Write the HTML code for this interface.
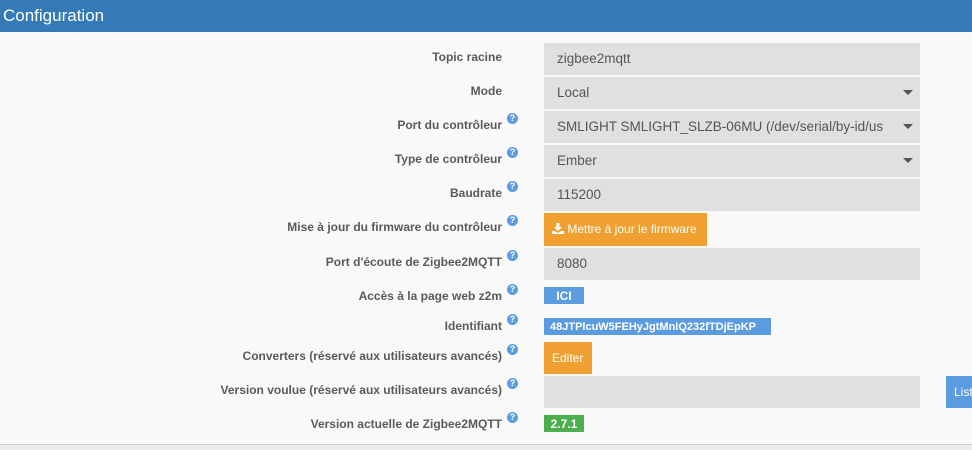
<!DOCTYPE html>
<html><head><meta charset="utf-8"><style>
*{box-sizing:border-box;margin:0;padding:0}
body{width:972px;height:450px;background:#f9f9f9;font-family:"Liberation Sans",sans-serif;position:relative;overflow:hidden;color:#555}
.hdr{position:absolute;left:0;top:0;width:972px;height:32px;background:#337ab7;color:#fff;font-size:17px;padding:6px 0 0 3px}
.lbl{position:absolute;right:470px;font-size:12px;font-weight:bold;color:#5a5a5a;white-space:nowrap;text-align:right}
.q{position:absolute;left:507px;width:11px;height:11px;border-radius:50%;background:#5b9be0;color:#fff;font-size:9px;font-weight:bold;text-align:center;line-height:11px}
.in{position:absolute;left:544px;width:376px;height:32px;background:#e0e0e0;font-size:13.5px;color:#555;padding:8px 0 0 13px;white-space:nowrap;overflow:hidden}
.car{position:absolute;right:7px;top:13px;width:0;height:0;border-left:5px solid transparent;border-right:5px solid transparent;border-top:5px solid #555}
.btn{position:absolute;left:544px;background:#f0a030;color:#fff;font-size:12px;padding:9px 8px 0;white-space:nowrap}
.tag{position:absolute;left:544px;height:17px;font-size:12px;font-weight:bold;color:#fff;padding:2px 6px 0;background:#5b9be0;white-space:nowrap;overflow:hidden}
</style></head><body>
<div class="hdr">Configuration</div>

<div class="lbl" style="top:50px;right:470px">Topic racine</div>
<div class="in" style="top:43px">zigbee2mqtt</div>

<div class="lbl" style="top:84px">Mode</div>
<div class="in" style="top:77px">Local<div class="car"></div></div>

<div class="lbl" style="top:118px">Port du contrôleur</div><div class="q" style="top:113px">?</div>
<div class="in" style="top:111px;padding-right:30px">SMLIGHT SMLIGHT_SLZB-06MU (/dev/serial/by-id/us<div class="car"></div></div>

<div class="lbl" style="top:152px">Type de contrôleur</div><div class="q" style="top:147px">?</div>
<div class="in" style="top:145px">Ember<div class="car"></div></div>

<div class="lbl" style="top:186px">Baudrate</div><div class="q" style="top:181px">?</div>
<div class="in" style="top:179px">115200</div>

<div class="lbl" style="top:220px">Mise à jour du firmware du contrôleur</div><div class="q" style="top:215px">?</div>
<div class="btn" style="top:213px;height:33px;width:163px"><svg width="12" height="11" viewBox="0 0 12 11" style="vertical-align:-1px"><path d="M4.5 0h3v4h2.5L6 8 2 4h2.5z M0 8h3l3 2 3-2h3v3H0z" fill="#fff"/></svg> Mettre à jour le firmware</div>

<div class="lbl" style="top:255px">Port d'écoute de Zigbee2MQTT</div><div class="q" style="top:250px">?</div>
<div class="in" style="top:248px">8080</div>

<div class="lbl" style="top:289px">Accès à la page web z2m</div><div class="q" style="top:284px">?</div>
<div class="tag" style="top:287px;width:40px;text-align:center">ICI</div>

<div class="lbl" style="top:319px">Identifiant</div><div class="q" style="top:314px">?</div>
<div class="tag" style="top:318px;width:227px;font-size:11px;padding-top:3px">48JTPlcuW5FEHyJgtMnIQ232fTDjEpKP</div>

<div class="lbl" style="top:349px">Converters (réservé aux utilisateurs avancés)</div><div class="q" style="top:344px">?</div>
<div class="btn" style="top:342px;height:32px;width:48px">Editer</div>

<div class="lbl" style="top:383px">Version voulue (réservé aux utilisateurs avancés)</div><div class="q" style="top:378px">?</div>
<div class="in" style="top:376px"></div>
<div style="position:absolute;left:946px;top:376px;width:30px;height:32px;background:#5b9be0;color:#fff;font-size:12px;padding:9px 0 0 8px">Liste</div>

<div class="lbl" style="top:417px">Version actuelle de Zigbee2MQTT</div><div class="q" style="top:412px">?</div>
<div class="tag" style="top:415px;width:40px;text-align:center;background:#4cae4c">2.7.1</div>

<div style="position:absolute;left:0;top:444px;width:972px;height:6px;background:#ececec;border-top:1px solid #ccc"></div>
</body></html>
